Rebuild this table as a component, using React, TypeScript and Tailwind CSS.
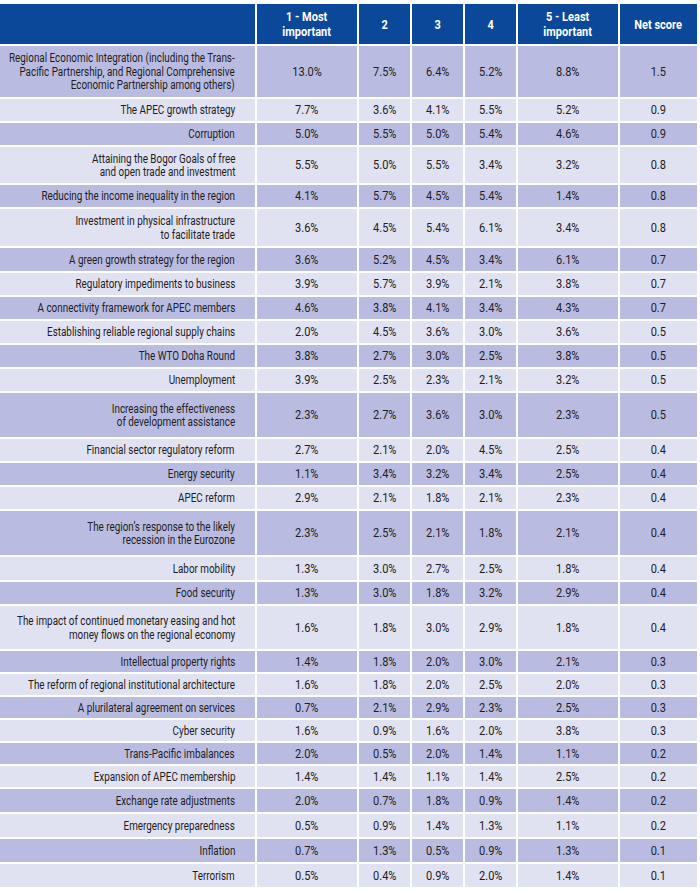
import React from 'react';

type Row = {
  label: React.ReactNode;
  values: string[];
  h: string;
};

const ROWS: Row[] = [
  {
    label: (
      <>
        Regional Economic Integration (including the Trans-
        <br />
        Pacific Partnership, and Regional Comprehensive
        <br />
        Economic Partnership among others)
      </>
    ),
    values: ['13.0%', '7.5%', '6.4%', '5.2%', '8.8%', '1.5'],
    h: 'h-[51px]',
  },
  { label: 'The APEC growth strategy', values: ['7.7%', '3.6%', '4.1%', '5.5%', '5.2%', '0.9'], h: 'h-[22px]' },
  { label: 'Corruption', values: ['5.0%', '5.5%', '5.0%', '5.4%', '4.6%', '0.9'], h: 'h-[22px]' },
  {
    label: (
      <>
        Attaining the Bogor Goals of free
        <br />
        and open trade and investment
      </>
    ),
    values: ['5.5%', '5.0%', '5.5%', '3.4%', '3.2%', '0.8'],
    h: 'h-[36px]',
  },
  { label: 'Reducing the income inequality in the region', values: ['4.1%', '5.7%', '4.5%', '5.4%', '1.4%', '0.8'], h: 'h-[22px]' },
  {
    label: (
      <>
        Investment in physical infrastructure
        <br />
        to facilitate trade
      </>
    ),
    values: ['3.6%', '4.5%', '5.4%', '6.1%', '3.4%', '0.8'],
    h: 'h-[37px]',
  },
  { label: 'A green growth strategy for the region', values: ['3.6%', '5.2%', '4.5%', '3.4%', '6.1%', '0.7'], h: 'h-[23px]' },
  { label: 'Regulatory impediments to business', values: ['3.9%', '5.7%', '3.9%', '2.1%', '3.8%', '0.7'], h: 'h-[22px]' },
  { label: 'A connectivity framework for APEC members', values: ['4.6%', '3.8%', '4.1%', '3.4%', '4.3%', '0.7'], h: 'h-[22px]' },
  { label: 'Establishing reliable regional supply chains', values: ['2.0%', '4.5%', '3.6%', '3.0%', '3.6%', '0.5'], h: 'h-[22px]' },
  { label: 'The WTO Doha Round', values: ['3.8%', '2.7%', '3.0%', '2.5%', '3.8%', '0.5'], h: 'h-[22px]' },
  { label: 'Unemployment', values: ['3.9%', '2.5%', '2.3%', '2.1%', '3.2%', '0.5'], h: 'h-[22px]' },
  {
    label: (
      <>
        Increasing the effectiveness
        <br />
        of development assistance
      </>
    ),
    values: ['2.3%', '2.7%', '3.6%', '3.0%', '2.3%', '0.5'],
    h: 'h-[44px]',
  },
  { label: 'Financial sector regulatory reform', values: ['2.7%', '2.1%', '2.0%', '4.5%', '2.5%', '0.4'], h: 'h-[22px]' },
  { label: 'Energy security', values: ['1.1%', '3.4%', '3.2%', '3.4%', '2.5%', '0.4'], h: 'h-[22px]' },
  { label: 'APEC reform', values: ['2.9%', '2.1%', '1.8%', '2.1%', '2.3%', '0.4'], h: 'h-[22px]' },
  {
    label: (
      <>
        The region’s response to the likely
        <br />
        recession in the Eurozone
      </>
    ),
    values: ['2.3%', '2.5%', '2.1%', '1.8%', '2.1%', '0.4'],
    h: 'h-[44px]',
  },
  { label: 'Labor mobility', values: ['1.3%', '3.0%', '2.7%', '2.5%', '1.8%', '0.4'], h: 'h-[23px]' },
  { label: 'Food security', values: ['1.3%', '3.0%', '1.8%', '3.2%', '2.9%', '0.4'], h: 'h-[22px]' },
  {
    label: (
      <>
        The impact of continued monetary easing and hot
        <br />
        money flows on the regional economy
      </>
    ),
    values: ['1.6%', '1.8%', '3.0%', '2.9%', '1.8%', '0.4'],
    h: 'h-[43px]',
  },
  { label: 'Intellectual property rights', values: ['1.4%', '1.8%', '2.0%', '3.0%', '2.1%', '0.3'], h: 'h-[21px]' },
  { label: 'The reform of regional institutional architecture', values: ['1.6%', '1.8%', '2.0%', '2.5%', '2.0%', '0.3'], h: 'h-[21px]' },
  { label: 'A plurilateral agreement on services', values: ['0.7%', '2.1%', '2.9%', '2.3%', '2.5%', '0.3'], h: 'h-[21px]' },
  { label: 'Cyber security', values: ['1.6%', '0.9%', '1.6%', '2.0%', '3.8%', '0.3'], h: 'h-[21px]' },
  { label: 'Trans-Pacific imbalances', values: ['2.0%', '0.5%', '2.0%', '1.4%', '1.1%', '0.2'], h: 'h-[21px]' },
  { label: 'Expansion of APEC membership', values: ['1.4%', '1.4%', '1.1%', '1.4%', '2.5%', '0.2'], h: 'h-[21px]' },
  { label: 'Exchange rate adjustments', values: ['2.0%', '0.7%', '1.8%', '0.9%', '1.4%', '0.2'], h: 'h-[23px]' },
  { label: 'Emergency preparedness', values: ['0.5%', '0.9%', '1.4%', '1.3%', '1.1%', '0.2'], h: 'h-[23px]' },
  { label: 'Inflation', values: ['0.7%', '1.3%', '0.5%', '0.9%', '1.3%', '0.1'], h: 'h-[23px]' },
  { label: 'Terrorism', values: ['0.5%', '0.4%', '0.9%', '2.0%', '1.4%', '0.1'], h: 'h-[23px]' },
];

const HEADERS = ['1 - Most\nimportant', '2', '3', '4', '5 - Least\nimportant', 'Net score'];

const COLS = 'grid grid-cols-[255px_100px_51px_51px_51px_100px_77px] gap-x-[2px]';

export default function App() {
  return (
    <div className="w-[700px] h-[890px] bg-white pt-[4px] text-[#1e1c1d] font-['Roboto',sans-serif]">
      <div className="flex flex-col gap-y-[2px] w-[697px]">
        {/* Header */}
        <div className={`${COLS} h-[40px]`}>
          <div className="bg-[#0c4899]" />
          {HEADERS.map((t, i) => (
            <div key={i} className="bg-[#0c4899] text-white flex items-center justify-center text-center">
              <span className="inline-block whitespace-pre-line font-bold text-[12.5px] leading-[15px] scale-x-[0.88]">
                {t}
              </span>
            </div>
          ))}
        </div>

        {ROWS.map((row, idx) => {
          const bg = idx % 2 === 0 ? 'bg-[#b9bce0]' : 'bg-[#e0e1f1]';
          return (
            <div key={idx} className={`${COLS} ${row.h}`}>
              <div className={`${bg} flex items-center justify-end pr-[20px]`}>
                <span className="inline-block shrink-0 whitespace-nowrap text-right text-[12.5px] leading-[13.5px] origin-right scale-x-[0.79]">
                  {row.label}
                </span>
              </div>
              {row.values.map((v, i) => (
                <div key={i} className={`${bg} flex items-center justify-center text-[12px]`}>
                  <span className="inline-block scale-x-[0.92]">{v}</span>
                </div>
              ))}
            </div>
          );
        })}
      </div>
    </div>
  );
}
